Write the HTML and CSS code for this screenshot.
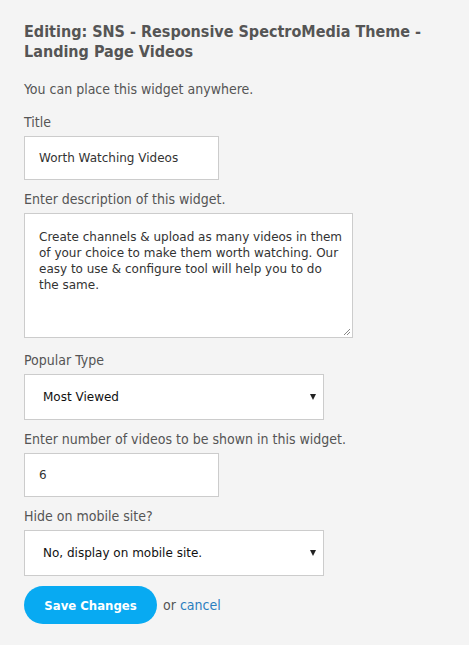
FILE: index.html
```html
<!DOCTYPE html>
<html>
<head>
<meta charset="utf-8">
<link rel="stylesheet" href="styles.css">
</head>
<body>
<div class="page">
  <h2 class="title">Editing: SNS - Responsive SpectroMedia Theme - Landing Page Videos</h2>
  <p class="intro">You can place this widget anywhere.</p>
  <div class="field">
    <label class="label">Title</label>
    <div class="input short">Worth Watching Videos</div>
  </div>
  <div class="field field-ta">
    <label class="label">Enter description of this widget.</label>
    <div class="textarea">Create channels &amp; upload as many videos in them of your choice to make them worth watching. Our easy to use &amp; configure tool will help you to do the same.
      <svg class="grip" width="10" height="10" viewBox="0 0 10 10"><path d="M9 3 L3 9 M9 6 L6 9" stroke="#888" stroke-width="1"/></svg>
    </div>
  </div>
  <div class="field">
    <label class="label">Popular Type</label>
    <div class="select"><span>Most Viewed</span><span class="arrow"></span></div>
  </div>
  <div class="field">
    <label class="label">Enter number of videos to be shown in this widget.</label>
    <div class="input short">6</div>
  </div>
  <div class="field">
    <label class="label">Hide on mobile site?</label>
    <div class="select"><span>No, display on mobile site.</span><span class="arrow"></span></div>
  </div>
  <div class="actions">
    <button class="save">Save Changes</button>
    <span class="or">or <a class="cancel" href="#">cancel</a></span>
  </div>
</div>
</body>
</html>
```
FILE: styles.css
```css
html, body { margin: 0; padding: 0; }
body {
  background: #f4f4f4;
  font-family: "DejaVu Sans Condensed", "DejaVu Sans", sans-serif;
  color: #555;
  width: 469px;
  height: 645px;
}
.page { padding: 22px 24px 0 24px; }
.title {
  margin: 0;
  font-size: 16px;
  line-height: 20px;
  font-weight: bold;
  color: #555;
  width: 430px;
}
.intro { margin: 17px 0 14px; font-size: 14px; line-height: 20px; }
.field { margin-top: 10px; }
.field:first-of-type { margin-top: 0; }
.field-ta { padding-bottom: 3px; }
.label { display: block; font-size: 14px; line-height: 18px; margin-bottom: 5px; }
.input, .textarea, .select {
  box-sizing: border-box;
  background: #fff;
  border: 1px solid #ccc;
  font-family: "DejaVu Sans", sans-serif;
  font-size: 12px;
  color: #333;
}
.input.short { width: 195px; height: 44px; padding: 0 14px; display: flex; align-items: center; }
.textarea {
  width: 329px; height: 125px; padding: 15px 9px 14px 14px; line-height: 16px; position: relative;
}
.grip { position: absolute; right: 1px; bottom: 1px; }
.select {
  width: 300px; height: 46px; padding: 0 7px 0 18px;
  display: flex; align-items: center; justify-content: space-between;
  color: #111;
}
.arrow {
  width: 0; height: 0;
  border-left: 3px solid transparent; border-right: 3px solid transparent;
  border-top: 6px solid #222;
}
.actions { margin-top: 10px; display: flex; align-items: center; gap: 6px; }
.save {
  background: #08aaf2; color: #fff; border: none; border-radius: 19px;
  height: 38px; width: 133px;
  font-family: "DejaVu Sans Condensed", sans-serif; font-weight: bold; font-size: 13px;
  padding: 0;
}
.or { font-size: 14px; color: #555; }
.cancel { color: #2a7ebf; text-decoration: none; }
```
